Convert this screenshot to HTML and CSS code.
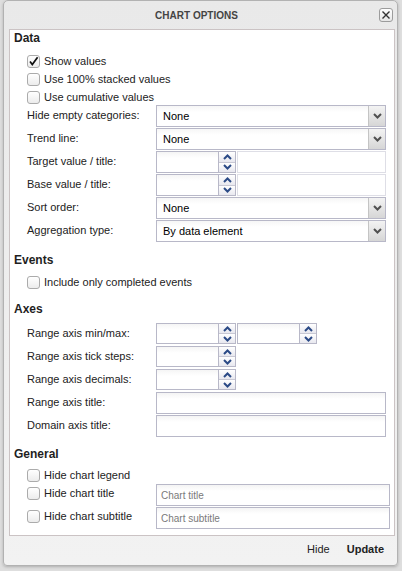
FILE: index.html
```html
<!DOCTYPE html>
<html>
<head>
<meta charset="utf-8">
<link rel="stylesheet" href="styles.css">
</head>
<body>
<div class="dialog">
  <div class="titlebar">
    <span class="title">CHART OPTIONS</span>
    <span class="close"><svg width="10" height="10" viewBox="0 0 10 10"><path d="M1.5 1.5 L8.5 8.5 M8.5 1.5 L1.5 8.5" stroke="#333" stroke-width="1.4" fill="none"/></svg></span>
  </div>
  <div class="panel">
    <div class="sec sec-data">Data</div>
    <div class="cb-row"><span class="cb"><svg width="11" height="11" viewBox="0 0 11 11"><path d="M2 5.5 L4.3 8.6 L9.6 1.2" stroke="#111" stroke-width="1.7" fill="none"/></svg></span>Show values</div>
    <div class="cb-row"><span class="cb"></span>Use 100% stacked values</div>
    <div class="cb-row"><span class="cb"></span>Use cumulative values</div>

    <div class="rows rows-data">
      <div class="frow"><span class="flabel">Hide empty categories:</span>
        <div class="select"><span class="sel-text">None</span><span class="sel-btn"><svg width="9" height="6" viewBox="0 0 9 6"><path d="M1 1 L4.5 4.5 L8 1" stroke="#505050" stroke-width="2" fill="none"/></svg></span></div></div>
      <div class="frow"><span class="flabel">Trend line:</span>
        <div class="select"><span class="sel-text">None</span><span class="sel-btn"><svg width="9" height="6" viewBox="0 0 9 6"><path d="M1 1 L4.5 4.5 L8 1" stroke="#505050" stroke-width="2" fill="none"/></svg></span></div></div>
      <div class="frow"><span class="flabel">Target value / title:</span>
        <div class="spin"><span class="spin-input"></span><span class="spin-btns"><span class="sb"><svg width="9" height="6" viewBox="0 0 9 6"><path d="M1 5 L4.5 1.5 L8 5" stroke="#2b4a86" stroke-width="2" fill="none"/></svg></span><span class="sb"><svg width="9" height="6" viewBox="0 0 9 6"><path d="M1 1 L4.5 4.5 L8 1" stroke="#2b4a86" stroke-width="2" fill="none"/></svg></span></span></div>
        <span class="text light"></span></div>
      <div class="frow"><span class="flabel">Base value / title:</span>
        <div class="spin"><span class="spin-input"></span><span class="spin-btns"><span class="sb"><svg width="9" height="6" viewBox="0 0 9 6"><path d="M1 5 L4.5 1.5 L8 5" stroke="#2b4a86" stroke-width="2" fill="none"/></svg></span><span class="sb"><svg width="9" height="6" viewBox="0 0 9 6"><path d="M1 1 L4.5 4.5 L8 1" stroke="#2b4a86" stroke-width="2" fill="none"/></svg></span></span></div>
        <span class="text light"></span></div>
      <div class="frow"><span class="flabel">Sort order:</span>
        <div class="select"><span class="sel-text">None</span><span class="sel-btn"><svg width="9" height="6" viewBox="0 0 9 6"><path d="M1 1 L4.5 4.5 L8 1" stroke="#505050" stroke-width="2" fill="none"/></svg></span></div></div>
      <div class="frow"><span class="flabel">Aggregation type:</span>
        <div class="select"><span class="sel-text">By data element</span><span class="sel-btn"><svg width="9" height="6" viewBox="0 0 9 6"><path d="M1 1 L4.5 4.5 L8 1" stroke="#505050" stroke-width="2" fill="none"/></svg></span></div></div>
    </div>

    <div class="sec sec-events">Events</div>
    <div class="cb-row cb-events"><span class="cb"></span>Include only completed events</div>

    <div class="sec sec-axes">Axes</div>
    <div class="rows rows-axes">
      <div class="frow"><span class="flabel">Range axis min/max:</span>
        <div class="spin short"><span class="spin-input"></span><span class="spin-btns"><span class="sb"><svg width="9" height="6" viewBox="0 0 9 6"><path d="M1 5 L4.5 1.5 L8 5" stroke="#2b4a86" stroke-width="2" fill="none"/></svg></span><span class="sb"><svg width="9" height="6" viewBox="0 0 9 6"><path d="M1 1 L4.5 4.5 L8 1" stroke="#2b4a86" stroke-width="2" fill="none"/></svg></span></span></div>
        <div class="spin short second"><span class="spin-input"></span><span class="spin-btns"><span class="sb"><svg width="9" height="6" viewBox="0 0 9 6"><path d="M1 5 L4.5 1.5 L8 5" stroke="#2b4a86" stroke-width="2" fill="none"/></svg></span><span class="sb"><svg width="9" height="6" viewBox="0 0 9 6"><path d="M1 1 L4.5 4.5 L8 1" stroke="#2b4a86" stroke-width="2" fill="none"/></svg></span></span></div>
      </div>
      <div class="frow"><span class="flabel">Range axis tick steps:</span>
        <div class="spin short"><span class="spin-input"></span><span class="spin-btns"><span class="sb"><svg width="9" height="6" viewBox="0 0 9 6"><path d="M1 5 L4.5 1.5 L8 5" stroke="#2b4a86" stroke-width="2" fill="none"/></svg></span><span class="sb"><svg width="9" height="6" viewBox="0 0 9 6"><path d="M1 1 L4.5 4.5 L8 1" stroke="#2b4a86" stroke-width="2" fill="none"/></svg></span></span></div>
      </div>
      <div class="frow"><span class="flabel">Range axis decimals:</span>
        <div class="spin short"><span class="spin-input"></span><span class="spin-btns"><span class="sb"><svg width="9" height="6" viewBox="0 0 9 6"><path d="M1 5 L4.5 1.5 L8 5" stroke="#2b4a86" stroke-width="2" fill="none"/></svg></span><span class="sb"><svg width="9" height="6" viewBox="0 0 9 6"><path d="M1 1 L4.5 4.5 L8 1" stroke="#2b4a86" stroke-width="2" fill="none"/></svg></span></span></div>
      </div>
      <div class="frow"><span class="flabel">Range axis title:</span><span class="text"></span></div>
      <div class="frow"><span class="flabel">Domain axis title:</span><span class="text"></span></div>
    </div>

    <div class="sec sec-general">General</div>
    <div class="cb-row cb-general"><span class="cb"></span>Hide chart legend</div>
    <div class="frow grow"><div class="cb-row glabel"><span class="cb"></span>Hide chart title</div><span class="text wide"><span class="ph">Chart title</span></span></div>
    <div class="frow grow"><div class="cb-row glabel"><span class="cb"></span>Hide chart subtitle</div><span class="text wide"><span class="ph">Chart subtitle</span></span></div>
  </div>
  <div class="footer">
    <span class="fbtn">Hide</span>
    <span class="fbtn bold">Update</span>
  </div>
</div>
</body>
</html>
```

FILE: styles.css
```css
* { box-sizing: border-box; }
html, body { margin: 0; padding: 0; }
body {
  background: #dedede;
  font-family: "Liberation Sans", Arial, sans-serif;
  font-size: 11px;
  color: #222;
  padding-left: 3px;
  height: 571px;
  overflow: hidden;
}
.dialog {
  width: 395px;
  height: 566px;
  background: linear-gradient(#e9e9e9, #f2f2f2);
  border: 1px solid #b2b2b2;
  border-radius: 5px 5px 4px 4px;
  box-shadow: 0 1px 3px rgba(0,0,0,0.22);
  display: flex;
  flex-direction: column;
}
.titlebar {
  height: 28px;
  display: flex;
  align-items: center;
  padding-right: 4px;
}
.title {
  flex: 1;
  text-align: center;
  margin-left: 10px;
  font-weight: bold;
  font-size: 10px;
  color: #444;
}
.close {
  width: 14px;
  height: 14px;
  border: 1px solid #9c9c9c;
  border-radius: 3px;
  background: linear-gradient(#ffffff, #e6e6e6);
  display: flex;
  align-items: center;
  justify-content: center;
}
.panel {
  margin: 0 2px 0 5px;
  height: 507px;
  background: #fff;
  border: 1px solid #cbc3c4;
  padding: 0 0 0 17px;
  display: flex;
  flex-direction: column;
}
.sec {
  font-size: 12px;
  font-weight: bold;
  height: 16px;
  line-height: 16px;
  margin-left: -13px;
  color: #1f1f1f;
}
.sec-data { margin-bottom: 6px; }
.sec-events { margin-top: 9px; }
.sec-axes { margin-top: 10px; }
.sec-general { margin-top: 8px; }

.cb-row {
  height: 18px;
  display: flex;
  align-items: center;
  color: #222;
}
.cb-events { margin-top: 5px; }
.cb-general { margin-top: 4px; }
.cb {
  width: 13px;
  height: 13px;
  border: 1px solid #ababab;
  border-radius: 3px;
  background: linear-gradient(#ffffff, #ececec);
  margin-right: 4px;
  display: flex;
  align-items: center;
  justify-content: center;
  flex: none;
}

.rows { display: flex; flex-direction: column; }
.rows-data { margin-top: -1px; }
.rows-axes { margin-top: 6px; }
.frow {
  height: 23px;
  display: flex;
  align-items: flex-start;
}
.flabel {
  width: 129px;
  line-height: 20px;
  flex: none;
}
.select {
  width: 230px;
  height: 22px;
  border: 1px solid #b8b8c8;
  background: linear-gradient(#f6f6f6, #ffffff 6px);
  display: flex;
  align-items: stretch;
}
.sel-text {
  flex: 1;
  padding-left: 6px;
  line-height: 20px;
  color: #000;
}
.sel-btn {
  width: 17px;
  border-left: 1px solid #c4c4c4;
  background: linear-gradient(#f3f3f3, #d6d6d6);
  display: flex;
  align-items: center;
  justify-content: center;
}
.spin {
  width: 80px;
  height: 22px;
  display: flex;
  flex: none;
}
.spin.short { height: 21px; }
.spin.second { margin-left: 1px; }
.spin-input {
  width: 63px;
  border: 1px solid #b8b8c8;
  background: linear-gradient(#f5f5f5, #ffffff 6px);
}
.spin-btns {
  width: 17px;
  border: 1px solid #b8b8c8;
  border-left: none;
  display: flex;
  flex-direction: column;
}
.sb {
  flex: 1;
  display: flex;
  align-items: center;
  justify-content: center;
  background: linear-gradient(#ffffff, #e8e8ef);
}
.sb + .sb { border-top: 1px solid #c8c8d4; }
.text {
  flex: none;
  width: 230px;
  height: 22px;
  border: 1px solid #b8b8c8;
  background: linear-gradient(#f4f4f4, #ffffff 6px);
}
.text.light {
  width: 149px;
  margin-left: 1px;
  border-color: #dedee6;
  background: #fff;
}
.text.wide {
  width: 234px;
  display: flex;
  align-items: center;
  padding-left: 4px;
  padding-top: 1px;
}
.glabel { width: 129px; }
.ph {
  color: #7a7a7a;
  font-size: 10px;
}
.footer {
  height: 29px;
  display: flex;
  justify-content: flex-end;
  align-items: center;
  padding: 0 13px 4px 0;
  gap: 17px;
  font-size: 11px;
  color: #222;
}
.fbtn.bold { font-weight: bold; }
```
